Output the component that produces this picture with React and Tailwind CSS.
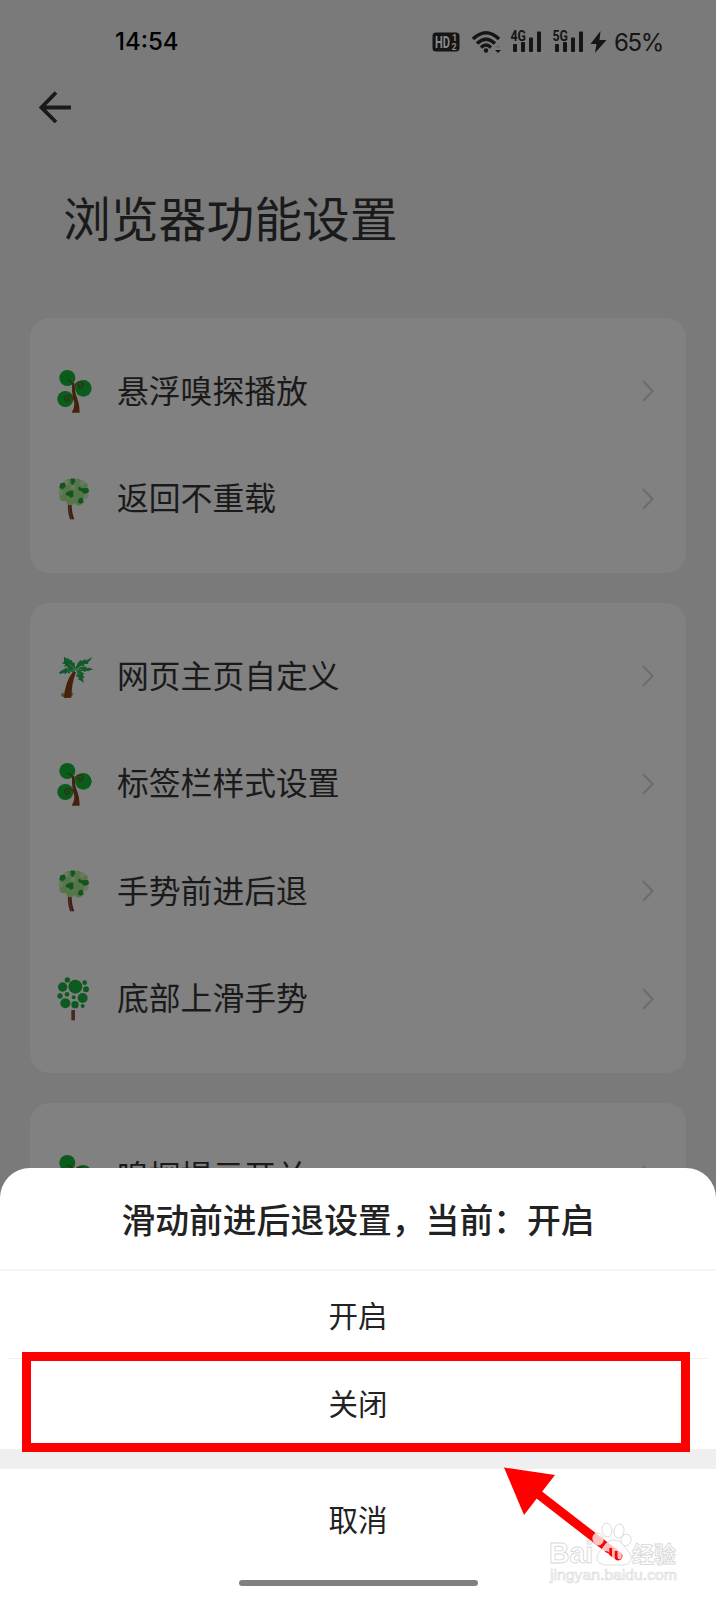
const VineTree = () => (
  <svg viewBox="0 0 108 132" className="w-9 h-11 shrink-0">
    <g fill="#095c1c">
      <circle cx="34" cy="27" r="24" />
      <circle cx="82" cy="58" r="25" />
      <circle cx="28" cy="90" r="24" />
    </g>
    <path d="M47 131Q60 112 52 88Q46 70 49 42L55 42Q54 62 60 78Q71 104 71 131Z" fill="#45200f" />
    <g fill="none" stroke="#3d2a12" strokeWidth="3.500" strokeLinecap="round">
      <path d="M52 58C50 42 44 34 37 35" />
      <path d="M55 62C54 44 66 36 76 40C86 45 80 60 70 56C64 52 68 46 73 49" />
      <path d="M56 96C50 80 36 76 28 83C22 92 32 101 39 94C42 88 36 86 34 89" />
    </g>
  </svg>
);

const LeafyTree = () => (
  <svg viewBox="0 0 108 132" className="w-9 h-11 shrink-0">
    <path d="M36 78L47 78Q46 104 55 127L42 127Q34 104 36 78Z" fill="#401d12" />
    <path d="M39 80Q39 108 48 127" fill="none" stroke="#5c3a28" strokeWidth="2" />
    <g fill="#56764a">
      <circle cx="53" cy="46" r="33" />
      <circle cx="40" cy="18" r="12" />
      <circle cx="66" cy="17" r="12" />
      <circle cx="23" cy="32" r="13" />
      <circle cx="83" cy="28" r="12" />
      <circle cx="23" cy="60" r="13" />
      <circle cx="84" cy="52" r="13" />
      <circle cx="43" cy="72" r="13" />
      <circle cx="68" cy="72" r="14" />
    </g>
    <g fill="#697a62">
      <circle cx="30" cy="17" r="8" />
      <circle cx="80" cy="18" r="8" />
      <circle cx="15" cy="47" r="7" />
      <circle cx="91" cy="58" r="7" />
      <circle cx="51" cy="31" r="7" />
    </g>
    <g fill="#11551f" stroke="#11551f" strokeWidth="3" strokeLinejoin="round">
      <path d="M14 20L25 18L28 28L20 35L12 32Z" />
      <path d="M45 6L56 6L56 14L49 23L46 17Z" />
      <path d="M68 31L78 35L96 35L97 45L83 49L78 42L69 39Z" />
      <path d="M31 48L40 43L50 42L51 58L43 61L40 54L31 54Z" />
      <path d="M68 67L78 63L82 75L73 79L67 76Z" />
    </g>
  </svg>
);

const PalmTree = () => (
  <svg viewBox="0 0 108 132" className="w-9 h-11 shrink-0 overflow-visible">
    <path d="M14 122L19 121L17 114L25 119L26 110L32 119H44L49 110L48 119L54 117L48 126L20 129Z" fill="#33592b" />
    <path d="M24 132Q27 82 51 53L60 55Q47 86 46 131Z" fill="#47210c" />
    <g fill="#125a2a">
      <path d="M61 47Q45 39 32 42L35 36L24 38L28 31L17 28L24 23L24 8L33 14L37 12L41 19L48 18L49 25L57 27L56 33Z" />
      <path d="M59 47Q60 28 75 17L76 22L90 15L89 20L109 9L101 22L96 24L97 30L85 30L84 37L75 36Z" />
      <path d="M60 48Q76 36 90 38L91 42L102 41L112 48L101 48L100 52L92 50L86 54L82 50L73 53Z" />
      <path d="M60 48L74 53L84 58L81 64L86 71L80 72L84 86L71 78L67 78L68 70L60 67L64 61Z" />
      <path d="M60 48L54 55L43 53L40 60L34 55L27 61L24 56L14 60L8 57L17 49L25 46L28 42L37 44L40 38Z" />
    </g>
    <path d="M40 30L60 48L80 32M60 48L82 45M60 48L70 62M60 48L35 52" fill="none" stroke="#45805a" strokeWidth="2" />
  </svg>
);

const dots = [
  [34, 9, 8], [20, 30, 14], [58, 29, 21], [86, 17, 7], [90, 37, 9], [12, 57, 8],
  [33, 52, 7], [53, 61, 6], [80, 63, 15], [28, 79, 15], [57, 83, 11], [80, 87, 6],
];

const DotTree = () => (
  <svg viewBox="0 0 108 132" className="w-9 h-11 shrink-0">
    <rect x="46" y="99" width="11" height="31" fill="#4a2b1b" />
    {dots.map(([cx, cy, r]) => (
      <circle key={`${cx}-${cy}`} cx={cx} cy={cy} r={r} fill="#0d5a20" />
    ))}
  </svg>
);

const groups = [
  [
    { label: '悬浮嗅探播放', Icon: VineTree },
    { label: '返回不重载', Icon: LeafyTree },
  ],
  [
    { label: '网页主页自定义', Icon: PalmTree },
    { label: '标签栏样式设置', Icon: VineTree },
    { label: '手势前进后退', Icon: LeafyTree },
    { label: '底部上滑手势', Icon: DotTree },
  ],
  [{ label: '嗅探提示开关', Icon: VineTree }],
];

const Signal = ({ label }) => (
  <svg viewBox="0 0 32 24" className="w-8 h-6">
    <g fill="#151515">
      <rect x="3" y="14" width="4" height="8" rx="1" />
      <rect x="11" y="12" width="4" height="10" rx="1" />
      <rect x="19" y="7.500" width="4" height="14.500" rx="1" />
      <rect x="27" y="1.500" width="4" height="20.500" rx="1" />
    </g>
    <text
      x="0.500"
      y="11"
      textLength="15.500"
      lengthAdjust="spacingAndGlyphs"
      fill="#151515"
      stroke="#7a7a7a"
      strokeWidth="1"
      paintOrder="stroke"
      className="text-[14px] font-bold font-['Roboto',sans-serif]"
    >
      {label}
    </text>
  </svg>
);

const StatusBar = () => (
  <div className="flex h-[83px] items-center pl-[115px] pr-[53px] font-['Inter',sans-serif]">
    <span className="pt-px text-[24px] leading-none font-medium text-black">14:54</span>
    <div className="ml-auto flex items-center text-[#151515]">
      <svg viewBox="0 0 28 20" className="mt-px mr-[12px] h-5 w-7">
        <rect x="0.500" y="0.500" width="27" height="19" rx="3.500" fill="#151515" />
        <g fill="#8a8a8a" className="font-bold font-['Roboto',sans-serif]">
          <text x="3" y="15.500" textLength="15" lengthAdjust="spacingAndGlyphs" className="text-[16px]">HD</text>
          <text x="20" y="9" className="text-[9px]">1</text>
          <text x="19.500" y="17.500" className="text-[9px]">2</text>
        </g>
      </svg>
      <svg viewBox="0 0 30 24" className="mr-[8px] h-6 w-[30px]">
        <g fill="none" stroke="#151515" strokeWidth="3.400">
          <path d="M1 9Q14 -3.500 27 9" />
          <path d="M5 13.500Q14 5 23 13.500" />
          <path d="M9 17.500Q14 12.500 19 17.500" />
        </g>
        <circle cx="14" cy="20.500" r="2.200" fill="#151515" />
        <path d="M23 20h6l-3 3z" fill="#151515" />
        <path d="M23 17.500l3-2.500l3 2.500z" fill="#666" />
      </svg>
      <Signal label="4G" />
      <div className="ml-[10px]">
        <Signal label="5G" />
      </div>
      <svg viewBox="0 0 17 24" className="ml-[6px] mr-[7px] h-6 w-[17px]">
        <path d="M10.500 1L0.500 14H6.500L5 23L16.500 10H9.500Z" fill="#151515" />
      </svg>
      <span className="w-[49px] whitespace-nowrap pt-[2px] text-[24px] leading-none tracking-[-1.3px]">65%</span>
    </div>
  </div>
);

const Watermark = () => (
  <svg viewBox="0 0 132 64" className="absolute left-[548px] top-[1522px] h-16 w-[132px]">
    <mask id="paw-letters">
      <rect width="132" height="64" fill="#fff" />
      <text x="53" y="39" textLength="25" lengthAdjust="spacingAndGlyphs" fill="#000" className="text-[19px] font-bold font-['Liberation_Sans',sans-serif]">du</text>
    </mask>
    <g fill="#ffffff" fillOpacity="0.75" stroke="#d9d9d9" strokeWidth="0.900">
      <ellipse cx="59" cy="8" rx="5" ry="7" transform="rotate(-8 59 8)" />
      <ellipse cx="71" cy="9" rx="5" ry="7" transform="rotate(10 71 9)" />
      <ellipse cx="50" cy="17" rx="5" ry="6" transform="rotate(-20 50 17)" />
      <ellipse cx="78" cy="18" rx="5" ry="6" transform="rotate(20 78 18)" />
      <path d="M66 18C74 18 76 25 80 29C86 35 83 43 75 43H57C48 42 47 34 52 29C57 25 58 18 66 18Z" mask="url(#paw-letters)" />
    </g>
    <g fill="#ffffff" stroke="#d9d9d9" strokeWidth="0.900">
      <text x="1" y="41" textLength="44" lengthAdjust="spacingAndGlyphs" className="text-[29px] font-bold font-['Liberation_Sans',sans-serif]">Bai</text>
      <text x="84" y="40" textLength="44" lengthAdjust="spacingAndGlyphs" className="text-[22px] font-bold font-['Noto_Sans_CJK_SC',sans-serif]">经验</text>
      <text x="2" y="58" textLength="127" lengthAdjust="spacingAndGlyphs" strokeWidth="0.600" className="text-[14px] font-['Liberation_Sans',sans-serif]">jingyan.baidu.com</text>
    </g>
  </svg>
);

const ActionSheet = () => (
  <div className="absolute inset-x-0 bottom-0 flex h-[432px] flex-col rounded-t-[30px] bg-white text-center text-[29.5px] leading-none text-[#222]">
    <div className="flex h-[103px] items-center justify-center border-b-2 border-[#f6f6f6] pt-px text-[33.8px] font-medium">
      滑动前进后退设置，当前：开启
    </div>
    <button className="flex h-[87px] items-center justify-center">开启</button>
    <div className="mx-2 h-px bg-[#efefef]" />
    <button className="flex h-[90px] items-center justify-center pb-[2px]">关闭</button>
    <div className="h-5 bg-[#efefef]" />
    <button className="flex h-[102px] items-center justify-center pb-[2px]">取消</button>
    <div className="mx-auto mt-[9px] h-[6px] w-[239px] rounded-full bg-[#808080]" />
  </div>
);

export default function App() {
  return (
    <div className="relative flex h-[1600px] w-[716px] flex-col overflow-hidden bg-[#7a7a7a] font-['Noto_Sans_CJK_SC',sans-serif] text-[#1a1a1a]">
      <StatusBar />
      <div className="h-[49px] pl-[39px] pt-[8px]">
        <svg viewBox="0 0 32 32" className="h-8 w-8">
          <path d="M17 1.500L2.500 16.500L17 31M2.500 16.500H32" fill="none" stroke="#1a1a1a" strokeWidth="3.800" />
        </svg>
      </div>
      <h1 className="flex h-[186px] items-center pb-[17px] pl-[63px] text-[47.8px] leading-none">浏览器功能设置</h1>
      <div className="flex flex-col gap-[30px] px-[30px]">
        {groups.map((rows, i) => (
          <section key={i} className="rounded-[20px] bg-[#818181] py-5">
            {rows.map(({ label, Icon }) => (
              <div key={label} className="flex h-[107.5px] items-center pb-px pl-[26px] pr-[32px]">
                <Icon />
                <span className="ml-[25px] pb-[3px] text-[31.8px] leading-none">{label}</span>
                <svg viewBox="0 0 12 24" className="ml-auto h-6 w-3">
                  <path d="M1 2L10.500 12L1 22" fill="none" stroke="#6c6c6c" strokeWidth="2" />
                </svg>
              </div>
            ))}
          </section>
        ))}
      </div>
      <ActionSheet />
      <div className="absolute left-[22px] top-[1352px] h-[100px] w-[668px] border-9 border-[#ff0000]" />
      <svg viewBox="0 0 120 96" className="absolute left-[504px] top-[1467px] h-24 w-[120px]">
        <path d="M0 0.500L51 8L20 48Z" fill="#ff0000" />
        <path d="M34 27L114 89" stroke="#ff0000" strokeWidth="9" strokeLinecap="round" />
      </svg>
      <Watermark />
    </div>
  );
}
